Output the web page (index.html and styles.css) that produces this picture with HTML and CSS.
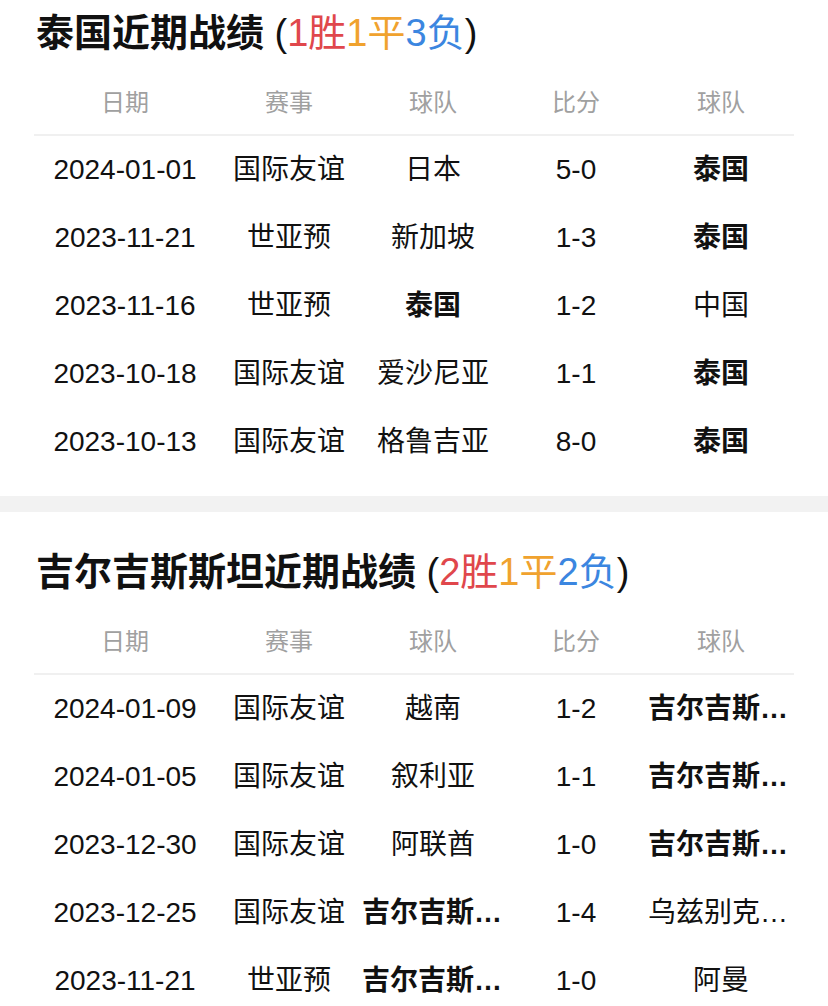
FILE: index.html
```html
<!DOCTYPE html>
<html lang="zh-CN">
<head>
<meta charset="utf-8">
<title>近期战绩</title>
<link rel="stylesheet" href="styles.css">
</head>
<body>
<section class="section first">
  <h2 class="title">泰国近期战绩 <span class="count">(<span class="win">1胜</span><span class="draw">1平</span><span class="loss">3负</span>)</span></h2>
  <div class="table">
    <div class="row head"><span>日期</span><span>赛事</span><span>球队</span><span>比分</span><span>球队</span></div>
    <div class="row"><span>2024-01-01</span><span>国际友谊</span><span>日本</span><span>5-0</span><span class="b">泰国</span></div>
    <div class="row"><span>2023-11-21</span><span>世亚预</span><span>新加坡</span><span>1-3</span><span class="b">泰国</span></div>
    <div class="row"><span>2023-11-16</span><span>世亚预</span><span class="b">泰国</span><span>1-2</span><span>中国</span></div>
    <div class="row"><span>2023-10-18</span><span>国际友谊</span><span>爱沙尼亚</span><span>1-1</span><span class="b">泰国</span></div>
    <div class="row"><span>2023-10-13</span><span>国际友谊</span><span>格鲁吉亚</span><span>8-0</span><span class="b">泰国</span></div>
  </div>
</section>
<div class="band"></div>
<section class="section second">
  <h2 class="title">吉尔吉斯斯坦近期战绩 <span class="count">(<span class="win">2胜</span><span class="draw">1平</span><span class="loss">2负</span>)</span></h2>
  <div class="table">
    <div class="row head"><span>日期</span><span>赛事</span><span>球队</span><span>比分</span><span>球队</span></div>
    <div class="row"><span>2024-01-09</span><span>国际友谊</span><span>越南</span><span>1-2</span><span class="b">吉尔吉斯斯坦</span></div>
    <div class="row"><span>2024-01-05</span><span>国际友谊</span><span>叙利亚</span><span>1-1</span><span class="b">吉尔吉斯斯坦</span></div>
    <div class="row"><span>2023-12-30</span><span>国际友谊</span><span>阿联酋</span><span>1-0</span><span class="b">吉尔吉斯斯坦</span></div>
    <div class="row"><span>2023-12-25</span><span>国际友谊</span><span class="b">吉尔吉斯斯坦</span><span>1-4</span><span>乌兹别克斯坦</span></div>
    <div class="row"><span>2023-11-21</span><span>世亚预</span><span class="b">吉尔吉斯斯坦</span><span>1-0</span><span>阿曼</span></div>
  </div>
</section>
</body>
</html>
```
FILE: styles.css
```css
html, body {
  margin: 0;
  padding: 0;
  background: #ffffff;
}
body {
  font-family: "Liberation Sans", "Noto Sans CJK SC", sans-serif;
  color: #111111;
  width: 828px;
  overflow: hidden;
}
.section {
  padding: 0 34px 20px 34px;
}
.section.first {
  padding-top: 8px;
}
.section.second {
  padding-top: 35px;
}
.title {
  margin: 0;
  padding-left: 2px;
  height: 50px;
  line-height: 50px;
  font-size: 38px;
  font-weight: bold;
  color: #111111;
  white-space: nowrap;
}
.count {
  font-weight: normal;
}
.win { color: #e0474c; }
.draw { color: #f0a22e; }
.loss { color: #3b86e0; }
.table {
  margin-top: 14px;
  width: 760px;
}
.row {
  display: grid;
  grid-template-columns: 182px 146px 142px 144px 146px;
  height: 68px;
  align-items: center;
  font-size: 28px;
}
.row span {
  text-align: center;
  line-height: 40px;
  white-space: nowrap;
  overflow: hidden;
  text-overflow: ellipsis;
  padding: 0;
}
.row.head {
  height: 62px;
  font-size: 24px;
  color: #a0a0a0;
  border-bottom: 2px solid #f0f0f0;
}
.b {
  font-weight: bold;
}
.band {
  height: 16px;
  background: #f2f2f2;
}
```
